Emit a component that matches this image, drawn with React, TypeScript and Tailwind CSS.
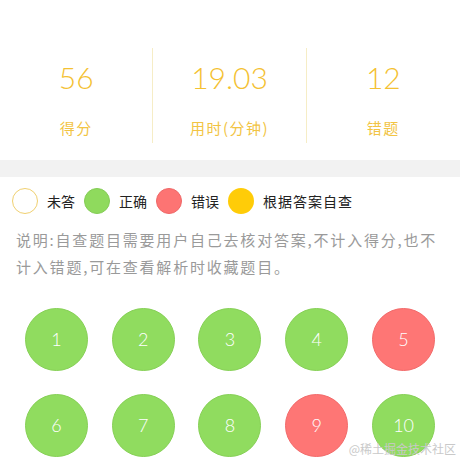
import React from "react";

type Status = "right" | "wrong";

const stats = [
  { value: "56", label: "得分" },
  { value: "19.03", label: "用时(分钟)" },
  { value: "12", label: "错题" },
];

const answers: Status[] = [
  "right", "right", "right", "right", "wrong",
  "right", "right", "right", "wrong", "right",
];

const cjk = { fontFamily: '"Noto Sans CJK SC", "Noto Sans", sans-serif' };
const num = { fontFamily: 'Lato, "Noto Sans", sans-serif' };

function Dot({ className }: { className: string }) {
  return <span className={`block w-[26px] h-[26px] rounded-full shrink-0 ${className}`} />;
}

export default function App() {
  return (
    <div className="relative w-[460px] h-[460px] overflow-hidden bg-white">
      {/* summary */}
      <div className="grid grid-cols-3 mt-[48px] h-[95px]">
        {stats.map((s, i) => (
          <div
            key={s.label}
            className={`flex flex-col items-center ${i < 2 ? "border-r border-[#f6edc6]" : ""}`}
          >
            <div style={num} className="mt-[11px] text-[30px] leading-[36px] font-light text-[#f4c132]">
              {s.value}
            </div>
            <div style={cjk} className="mt-[22px] text-[15px] leading-[22px] tracking-[1.5px] text-[#f2c443]">
              {s.label}
            </div>
          </div>
        ))}
      </div>

      <div className="mt-[17px] h-[17px] bg-[#f2f2f2]" />

      {/* legend */}
      <div style={cjk} className="flex items-center mt-[11px] pl-[12px] gap-[9px] text-[14px] text-[#222]">
        <Dot className="border border-[#f0d070] bg-white" />
        <span>未答</span>
        <Dot className="bg-[#8fda5d] border border-[#84cc55]" />
        <span>正确</span>
        <Dot className="bg-[#fd7473] border border-[#ef6767]" />
        <span>错误</span>
        <Dot className="bg-[#ffcc08]" />
        <span className="tracking-[1px]">根据答案自查</span>
      </div>

      <div style={cjk} className="mt-[12px] pl-[16px] text-[15px] leading-[27px] tracking-[1.8px] text-[#9a9a9a]">
        <div className="whitespace-nowrap">说明:自查题目需要用户自己去核对答案,不计入得分,也不</div>
        <div className="whitespace-nowrap">计入错题,可在查看解析时收藏题目。</div>
      </div>

      {/* answer sheet */}
      <div className="grid grid-cols-5 gap-y-[23px] px-[13px] mt-[28px]">
        {answers.map((a, i) => (
          <div key={i} className="flex justify-center">
            <div
              style={num}
              className={`w-[63px] h-[63px] rounded-full flex items-center justify-center text-[18px] font-light text-white ${
                a === "right"
                  ? "bg-[#90dc5f] border border-[#86d056]"
                  : "bg-[#fe7675] border border-[#f26a6a]"
              }`}
            >
              {i + 1}
            </div>
          </div>
        ))}
      </div>

      <div style={cjk} className="absolute right-[4px] bottom-[2px] text-[12px] text-[#c9c9c9]">
        @稀土掘金技术社区
      </div>
    </div>
  );
}
